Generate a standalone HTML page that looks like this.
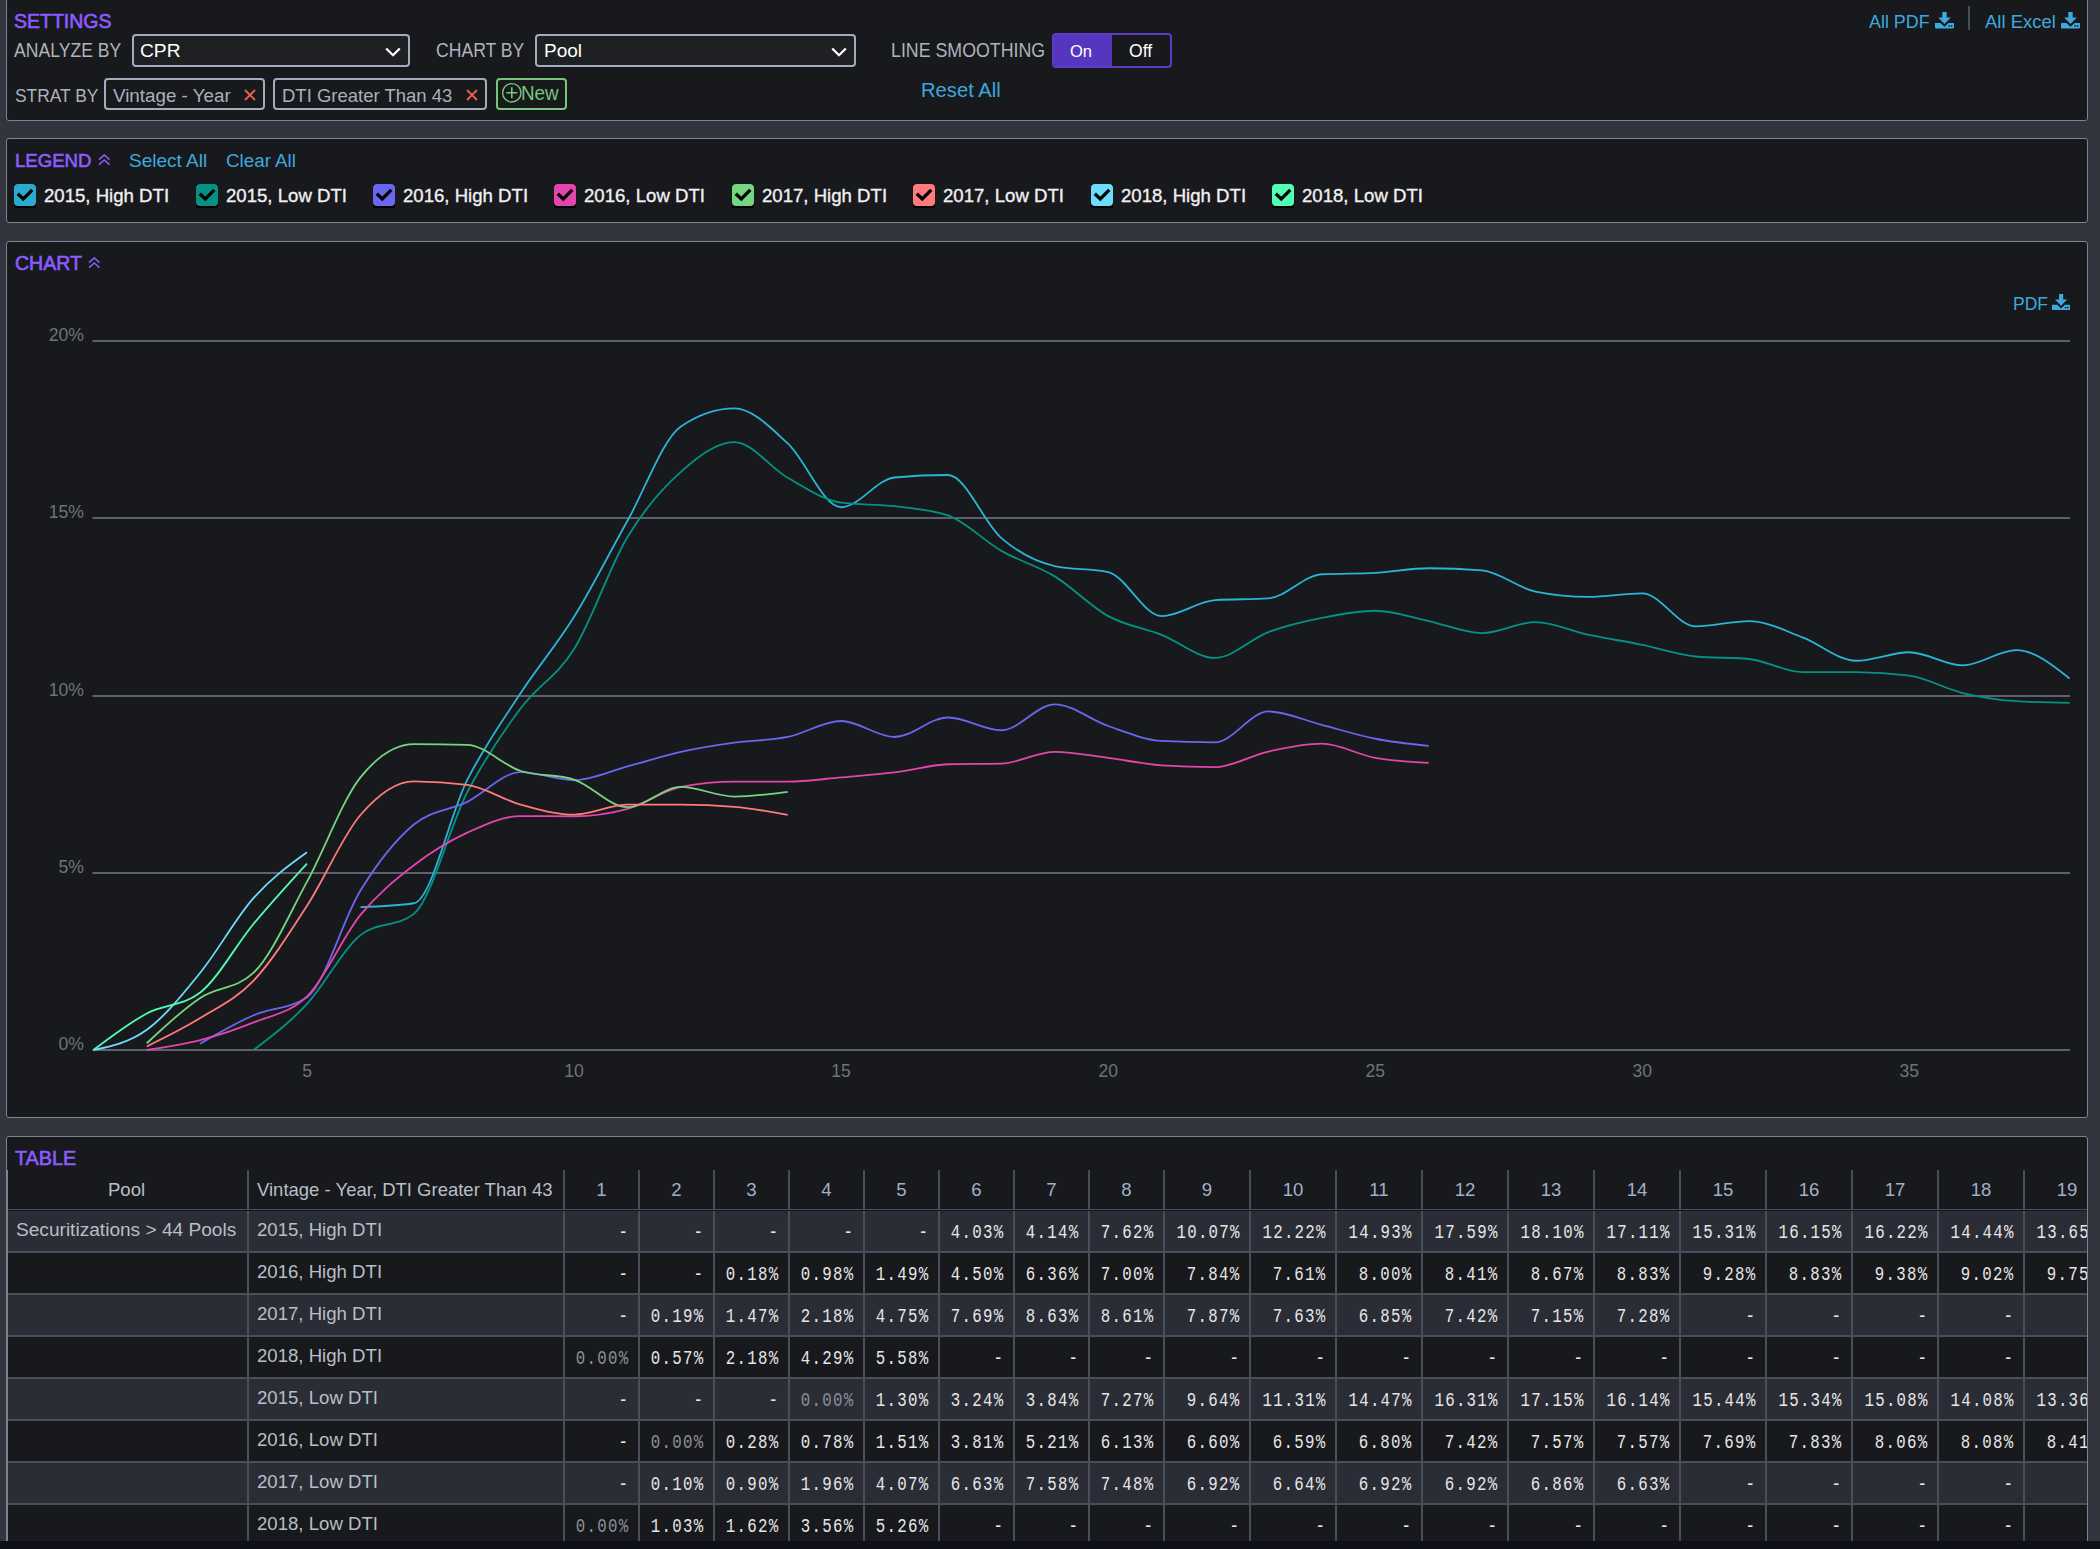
<!DOCTYPE html>
<html><head><meta charset="utf-8"><title>CPR Chart</title>
<style>
html,body{margin:0;padding:0}
body{width:2100px;height:1549px;overflow:hidden;position:relative;background:#32353e;font-family:'Liberation Sans',sans-serif}
.panel{position:absolute;left:6px;width:2082px;box-sizing:border-box;border:1px solid #7d838f;border-radius:3px;background:#18191c;overflow:hidden}
</style></head><body>

<div class="panel" style="top:-2px;height:123px"></div>
<div class="panel" style="top:138px;height:85px"></div>
<div class="panel" style="top:241px;height:877px"></div>
<div class="panel" style="top:1136px;height:500px"></div>
<div style="position:absolute;left:14px;top:10.35px;font:400 19.5px/22.42px 'Liberation Sans',sans-serif;color:#8c5cff;white-space:pre;-webkit-text-stroke:0.6px #8c5cff">SETTINGS</div>
<div style="position:absolute;left:14px;top:41.07px;font:400 17.6px/20.24px 'Liberation Sans',sans-serif;color:#aeb3bd;white-space:pre;transform:scaleY(1.1);transform-origin:0 16.19px">ANALYZE BY</div>
<div style="position:absolute;left:132px;top:34px;width:278px;height:33px;box-sizing:border-box;border:2px solid #a3acbd;border-radius:4px;background:#1f2024"></div>
<div style="position:absolute;left:140px;top:39.62px;font:400 19.2px/22.08px 'Liberation Sans',sans-serif;color:#ffffff;white-space:pre;">CPR</div>
<svg style="position:absolute;left:385px;top:46.7px" width="16" height="10" viewBox="0 0 16 10"><polyline points="1.2,1.5 8,8.2 14.8,1.5" fill="none" stroke="#fff" stroke-width="2.3"/></svg>
<div style="position:absolute;left:436px;top:41.07px;font:400 17.6px/20.24px 'Liberation Sans',sans-serif;color:#aeb3bd;white-space:pre;transform:scaleY(1.1);transform-origin:0 16.19px">CHART BY</div>
<div style="position:absolute;left:535px;top:34px;width:321px;height:33px;box-sizing:border-box;border:2px solid #a3acbd;border-radius:4px;background:#1f2024"></div>
<div style="position:absolute;left:544px;top:39.80px;font:400 19.0px/21.85px 'Liberation Sans',sans-serif;color:#ffffff;white-space:pre;">Pool</div>
<svg style="position:absolute;left:831px;top:46.7px" width="16" height="10" viewBox="0 0 16 10"><polyline points="1.2,1.5 8,8.2 14.8,1.5" fill="none" stroke="#fff" stroke-width="2.3"/></svg>
<div style="position:absolute;left:891px;top:40.89px;font:400 17.8px/20.47px 'Liberation Sans',sans-serif;color:#aeb3bd;white-space:pre;transform:scaleY(1.1);transform-origin:0 16.38px">LINE SMOOTHING</div>
<div style="position:absolute;left:1052px;top:33px;width:120px;height:35px;box-sizing:border-box;border:2px solid #5a3cc6;border-radius:4px;background:#18191c;overflow:hidden"><div style="position:absolute;left:0;top:0;width:58px;height:31px;background:#5636be"></div></div>
<div style="position:absolute;left:1070px;top:42.07px;font:400 16.5px/18.97px 'Liberation Sans',sans-serif;color:#ffffff;white-space:pre;">On</div>
<div style="position:absolute;left:1129px;top:41.07px;font:400 17.6px/20.24px 'Liberation Sans',sans-serif;color:#ffffff;white-space:pre;">Off</div>
<div style="position:absolute;left:921px;top:78.72px;font:400 20.2px/23.23px 'Liberation Sans',sans-serif;color:#3ea8de;white-space:pre;">Reset All</div>
<div style="position:absolute;left:15px;top:86.25px;font:400 17.4px/20.01px 'Liberation Sans',sans-serif;color:#aeb3bd;white-space:pre;transform:scaleY(1.1);transform-origin:0 16.01px">STRAT BY</div>
<div style="position:absolute;left:104px;top:78px;width:161px;height:32px;box-sizing:border-box;border:2px solid #a3acbd;border-radius:4px"></div><div style="position:absolute;left:113px;top:84.99px;font:400 18.8px/21.62px 'Liberation Sans',sans-serif;color:#a9b0bd;white-space:pre;">Vintage - Year</div>
<svg style="position:absolute;left:244px;top:89px" width="12" height="12" viewBox="0 0 12 12"><path d="M1,1L11,11M11,1L1,11" stroke="#e8604c" stroke-width="1.9"/></svg>
<div style="position:absolute;left:273px;top:78px;width:214px;height:32px;box-sizing:border-box;border:2px solid #a3acbd;border-radius:4px"></div><div style="position:absolute;left:282px;top:85.26px;font:400 18.5px/21.27px 'Liberation Sans',sans-serif;color:#a9b0bd;white-space:pre;">DTI Greater Than 43</div>
<svg style="position:absolute;left:466px;top:89px" width="12" height="12" viewBox="0 0 12 12"><path d="M1,1L11,11M11,1L1,11" stroke="#e8604c" stroke-width="1.9"/></svg>
<div style="position:absolute;left:496px;top:78px;width:71px;height:32px;box-sizing:border-box;border:2px solid #79c57c;border-radius:4px"></div>
<svg style="position:absolute;left:501px;top:82px" width="22" height="22" viewBox="0 0 22 22"><circle cx="10.8" cy="10.8" r="9.2" fill="none" stroke="#79c57c" stroke-width="1.4"/><path d="M10.8,5.3V16.3M5.3,10.8H16.3" stroke="#79c57c" stroke-width="1.6"/></svg>
<div style="position:absolute;left:521px;top:83.49px;font:400 18.8px/21.62px 'Liberation Sans',sans-serif;color:#79c57c;white-space:pre;transform:scaleY(1.06);transform-origin:0 17.3px">New</div>
<div style="position:absolute;left:1869px;top:11.60px;font:400 17.9px/20.58px 'Liberation Sans',sans-serif;color:#3ea8de;white-space:pre;">All PDF</div>
<svg style="position:absolute;left:1935px;top:11.7px" width="19" height="17" viewBox="0 0 19 17" preserveAspectRatio="none">
<path d="M7.3,0H11.7V5.6H15.9L9.5,12L3.1,5.6H7.3Z" fill="#3ea8de"/>
<path d="M0,11H5.4L9.5,14.8L13.6,11H19V15.6Q19,16.4 18.2,16.4H0.8Q0,16.4 0,15.6Z" fill="#3ea8de"/>
<rect x="13.4" y="13.2" width="1.5" height="1.5" fill="#18191c"/><rect x="15.8" y="13.2" width="1.5" height="1.5" fill="#18191c"/>
</svg>
<div style="position:absolute;left:1968px;top:6px;width:2px;height:24px;background:#4a4e57"></div>
<div style="position:absolute;left:1985px;top:11.06px;font:400 18.5px/21.27px 'Liberation Sans',sans-serif;color:#3ea8de;white-space:pre;">All Excel</div>
<svg style="position:absolute;left:2061px;top:11.7px" width="19" height="17" viewBox="0 0 19 17" preserveAspectRatio="none">
<path d="M7.3,0H11.7V5.6H15.9L9.5,12L3.1,5.6H7.3Z" fill="#3ea8de"/>
<path d="M0,11H5.4L9.5,14.8L13.6,11H19V15.6Q19,16.4 18.2,16.4H0.8Q0,16.4 0,15.6Z" fill="#3ea8de"/>
<rect x="13.4" y="13.2" width="1.5" height="1.5" fill="#18191c"/><rect x="15.8" y="13.2" width="1.5" height="1.5" fill="#18191c"/>
</svg>
<div style="position:absolute;left:15px;top:150.17px;font:400 18.6px/21.39px 'Liberation Sans',sans-serif;color:#8c5cff;white-space:pre;-webkit-text-stroke:0.6px #8c5cff">LEGEND</div>
<svg style="position:absolute;left:98px;top:154px" width="12.5" height="11.5" viewBox="0 0 12.5 11.5">
<polyline points="1,5.6 6.25,0.9 11.5,5.6" fill="none" stroke="#8c5cff" stroke-width="1.5"/>
<polyline points="1,10.6 6.25,5.9 11.5,10.6" fill="none" stroke="#8c5cff" stroke-width="1.5"/>
</svg>
<div style="position:absolute;left:129px;top:149.81px;font:400 19.0px/21.85px 'Liberation Sans',sans-serif;color:#3ea8de;white-space:pre;">Select All</div>
<div style="position:absolute;left:226px;top:149.99px;font:400 18.8px/21.62px 'Liberation Sans',sans-serif;color:#3ea8de;white-space:pre;">Clear All</div>
<div style="position:absolute;left:14px;top:184px;width:21.5px;height:23.5px;background:#000"></div>
<div style="position:absolute;left:14px;top:184px;width:22px;height:22px;border-radius:4px;background:#2aaacc"></div>
<svg style="position:absolute;left:14px;top:184px" width="22" height="22" viewBox="0 0 22 22"><polyline points="3.8,9.7 9.3,15.0 18.3,5.9" fill="none" stroke="#000" stroke-width="3.3"/></svg>
<div style="position:absolute;left:44px;top:184.67px;font:400 18.6px/21.39px 'Liberation Sans',sans-serif;color:#f0f0f0;white-space:pre;-webkit-text-stroke:0.35px #f0f0f0">2015, High DTI</div>
<div style="position:absolute;left:196px;top:184px;width:21.5px;height:23.5px;background:#000"></div>
<div style="position:absolute;left:196px;top:184px;width:22px;height:22px;border-radius:4px;background:#049284"></div>
<svg style="position:absolute;left:196px;top:184px" width="22" height="22" viewBox="0 0 22 22"><polyline points="3.8,9.7 9.3,15.0 18.3,5.9" fill="none" stroke="#000" stroke-width="3.3"/></svg>
<div style="position:absolute;left:226px;top:184.67px;font:400 18.6px/21.39px 'Liberation Sans',sans-serif;color:#f0f0f0;white-space:pre;-webkit-text-stroke:0.35px #f0f0f0">2015, Low DTI</div>
<div style="position:absolute;left:373px;top:184px;width:21.5px;height:23.5px;background:#000"></div>
<div style="position:absolute;left:373px;top:184px;width:22px;height:22px;border-radius:4px;background:#6966f0"></div>
<svg style="position:absolute;left:373px;top:184px" width="22" height="22" viewBox="0 0 22 22"><polyline points="3.8,9.7 9.3,15.0 18.3,5.9" fill="none" stroke="#000" stroke-width="3.3"/></svg>
<div style="position:absolute;left:403px;top:184.67px;font:400 18.6px/21.39px 'Liberation Sans',sans-serif;color:#f0f0f0;white-space:pre;-webkit-text-stroke:0.35px #f0f0f0">2016, High DTI</div>
<div style="position:absolute;left:554px;top:184px;width:21.5px;height:23.5px;background:#000"></div>
<div style="position:absolute;left:554px;top:184px;width:22px;height:22px;border-radius:4px;background:#e246ac"></div>
<svg style="position:absolute;left:554px;top:184px" width="22" height="22" viewBox="0 0 22 22"><polyline points="3.8,9.7 9.3,15.0 18.3,5.9" fill="none" stroke="#000" stroke-width="3.3"/></svg>
<div style="position:absolute;left:584px;top:184.67px;font:400 18.6px/21.39px 'Liberation Sans',sans-serif;color:#f0f0f0;white-space:pre;-webkit-text-stroke:0.35px #f0f0f0">2016, Low DTI</div>
<div style="position:absolute;left:732px;top:184px;width:21.5px;height:23.5px;background:#000"></div>
<div style="position:absolute;left:732px;top:184px;width:22px;height:22px;border-radius:4px;background:#75d580"></div>
<svg style="position:absolute;left:732px;top:184px" width="22" height="22" viewBox="0 0 22 22"><polyline points="3.8,9.7 9.3,15.0 18.3,5.9" fill="none" stroke="#000" stroke-width="3.3"/></svg>
<div style="position:absolute;left:762px;top:184.67px;font:400 18.6px/21.39px 'Liberation Sans',sans-serif;color:#f0f0f0;white-space:pre;-webkit-text-stroke:0.35px #f0f0f0">2017, High DTI</div>
<div style="position:absolute;left:913px;top:184px;width:21.5px;height:23.5px;background:#000"></div>
<div style="position:absolute;left:913px;top:184px;width:22px;height:22px;border-radius:4px;background:#ff7a7a"></div>
<svg style="position:absolute;left:913px;top:184px" width="22" height="22" viewBox="0 0 22 22"><polyline points="3.8,9.7 9.3,15.0 18.3,5.9" fill="none" stroke="#000" stroke-width="3.3"/></svg>
<div style="position:absolute;left:943px;top:184.67px;font:400 18.6px/21.39px 'Liberation Sans',sans-serif;color:#f0f0f0;white-space:pre;-webkit-text-stroke:0.35px #f0f0f0">2017, Low DTI</div>
<div style="position:absolute;left:1091px;top:184px;width:21.5px;height:23.5px;background:#000"></div>
<div style="position:absolute;left:1091px;top:184px;width:22px;height:22px;border-radius:4px;background:#6cdcfc"></div>
<svg style="position:absolute;left:1091px;top:184px" width="22" height="22" viewBox="0 0 22 22"><polyline points="3.8,9.7 9.3,15.0 18.3,5.9" fill="none" stroke="#000" stroke-width="3.3"/></svg>
<div style="position:absolute;left:1121px;top:184.67px;font:400 18.6px/21.39px 'Liberation Sans',sans-serif;color:#f0f0f0;white-space:pre;-webkit-text-stroke:0.35px #f0f0f0">2018, High DTI</div>
<div style="position:absolute;left:1272px;top:184px;width:21.5px;height:23.5px;background:#000"></div>
<div style="position:absolute;left:1272px;top:184px;width:22px;height:22px;border-radius:4px;background:#50ffb2"></div>
<svg style="position:absolute;left:1272px;top:184px" width="22" height="22" viewBox="0 0 22 22"><polyline points="3.8,9.7 9.3,15.0 18.3,5.9" fill="none" stroke="#000" stroke-width="3.3"/></svg>
<div style="position:absolute;left:1302px;top:184.67px;font:400 18.6px/21.39px 'Liberation Sans',sans-serif;color:#f0f0f0;white-space:pre;-webkit-text-stroke:0.35px #f0f0f0">2018, Low DTI</div>
<div style="position:absolute;left:15px;top:252.35px;font:400 19.5px/22.42px 'Liberation Sans',sans-serif;color:#8c5cff;white-space:pre;-webkit-text-stroke:0.6px #8c5cff">CHART</div>
<svg style="position:absolute;left:88px;top:257px" width="12.5" height="11.5" viewBox="0 0 12.5 11.5">
<polyline points="1,5.6 6.25,0.9 11.5,5.6" fill="none" stroke="#8c5cff" stroke-width="1.5"/>
<polyline points="1,10.6 6.25,5.9 11.5,10.6" fill="none" stroke="#8c5cff" stroke-width="1.5"/>
</svg>
<div style="position:absolute;left:2013px;top:294.16px;font:400 17.5px/20.12px 'Liberation Sans',sans-serif;color:#3ea8de;white-space:pre;">PDF</div>
<svg style="position:absolute;left:2052px;top:293.8px" width="18.2" height="16.6" viewBox="0 0 19 17" preserveAspectRatio="none">
<path d="M7.3,0H11.7V5.6H15.9L9.5,12L3.1,5.6H7.3Z" fill="#3ea8de"/>
<path d="M0,11H5.4L9.5,14.8L13.6,11H19V15.6Q19,16.4 18.2,16.4H0.8Q0,16.4 0,15.6Z" fill="#3ea8de"/>
<rect x="13.4" y="13.2" width="1.5" height="1.5" fill="#18191c"/><rect x="15.8" y="13.2" width="1.5" height="1.5" fill="#18191c"/>
</svg>
<svg style="position:absolute;left:0;top:0" width="2100" height="1549" viewBox="0 0 2100 1549"><rect x="92.5" y="340" width="1977.5" height="2" fill="#5c616b"/><rect x="92.5" y="517" width="1977.5" height="2" fill="#5c616b"/><rect x="92.5" y="695" width="1977.5" height="2" fill="#5c616b"/><rect x="92.5" y="872" width="1977.5" height="2" fill="#5c616b"/><rect x="92.5" y="1049" width="1977.5" height="2" fill="#5c616b"/></svg>
<div style="position:absolute;right:2016px;top:325.07px;font:400 17.6px/20.24px 'Liberation Sans',sans-serif;color:#6e737d;white-space:pre;">20%</div>
<div style="position:absolute;right:2016px;top:502.07px;font:400 17.6px/20.24px 'Liberation Sans',sans-serif;color:#6e737d;white-space:pre;">15%</div>
<div style="position:absolute;right:2016px;top:680.07px;font:400 17.6px/20.24px 'Liberation Sans',sans-serif;color:#6e737d;white-space:pre;">10%</div>
<div style="position:absolute;right:2016px;top:857.07px;font:400 17.6px/20.24px 'Liberation Sans',sans-serif;color:#6e737d;white-space:pre;">5%</div>
<div style="position:absolute;right:2016px;top:1034.07px;font:400 17.6px/20.24px 'Liberation Sans',sans-serif;color:#6e737d;white-space:pre;">0%</div>
<div style="position:absolute;left:107.03999999999996px;width:400px;text-align:center;top:1061.07px;font:400 17.6px/20.24px 'Liberation Sans',sans-serif;color:#6e737d;white-space:pre;">5</div>
<div style="position:absolute;left:374.0899999999999px;width:400px;text-align:center;top:1061.07px;font:400 17.6px/20.24px 'Liberation Sans',sans-serif;color:#6e737d;white-space:pre;">10</div>
<div style="position:absolute;left:641.14px;width:400px;text-align:center;top:1061.07px;font:400 17.6px/20.24px 'Liberation Sans',sans-serif;color:#6e737d;white-space:pre;">15</div>
<div style="position:absolute;left:908.19px;width:400px;text-align:center;top:1061.07px;font:400 17.6px/20.24px 'Liberation Sans',sans-serif;color:#6e737d;white-space:pre;">20</div>
<div style="position:absolute;left:1175.24px;width:400px;text-align:center;top:1061.07px;font:400 17.6px/20.24px 'Liberation Sans',sans-serif;color:#6e737d;white-space:pre;">25</div>
<div style="position:absolute;left:1442.29px;width:400px;text-align:center;top:1061.07px;font:400 17.6px/20.24px 'Liberation Sans',sans-serif;color:#6e737d;white-space:pre;">30</div>
<div style="position:absolute;left:1709.34px;width:400px;text-align:center;top:1061.07px;font:400 17.6px/20.24px 'Liberation Sans',sans-serif;color:#6e737d;white-space:pre;">35</div>
<svg style="position:absolute;left:0;top:0" width="2100" height="1549" viewBox="0 0 2100 1549"><path d="M360.45,907.14C378.25,906.49 396.06,905.84 413.86,903.24C431.66,900.64 449.47,814.91 467.27,779.87C485.07,744.83 502.88,720.20 520.68,693.02C538.48,665.84 556.29,645.52 574.09,616.80C591.89,588.09 609.70,552.46 627.50,520.73C645.30,489.00 663.11,438.49 680.91,426.43C698.71,414.38 716.52,408.35 734.32,408.35C752.12,408.35 769.93,426.97 787.73,443.45C805.53,459.93 823.34,507.26 841.14,507.26C858.94,507.26 876.75,479.14 894.55,477.48C912.35,475.83 930.16,475.00 947.96,475.00C965.76,475.00 983.57,522.92 1001.37,538.10C1019.17,553.29 1036.98,562.09 1054.78,566.11C1072.58,570.13 1090.39,568.12 1108.19,572.13C1125.99,576.15 1143.80,616.09 1161.60,616.09C1179.40,616.09 1197.21,601.32 1215.01,600.14C1232.81,598.96 1250.62,599.55 1268.42,598.37C1286.22,597.19 1304.03,575.21 1321.83,574.26C1339.63,573.32 1357.44,573.79 1375.24,572.84C1393.04,571.90 1410.85,568.23 1428.65,568.23C1446.45,568.23 1464.26,568.94 1482.06,570.36C1499.86,571.78 1517.67,588.09 1535.47,591.63C1553.27,595.18 1571.08,596.95 1588.88,596.95C1606.68,596.95 1624.49,593.40 1642.29,593.40C1660.09,593.40 1677.90,626.37 1695.70,626.37C1713.50,626.37 1731.31,621.05 1749.11,621.05C1766.91,621.05 1784.72,630.74 1802.52,637.36C1820.32,643.98 1838.13,660.76 1855.93,660.76C1873.73,660.76 1891.54,652.25 1909.34,652.25C1927.14,652.25 1944.95,665.37 1962.75,665.37C1980.55,665.37 1998.36,650.12 2016.16,650.12C2033.96,650.12 2051.77,664.30 2069.57,678.48" fill="none" stroke="#2ab4d7" stroke-width="1.8"/><path d="M253.63,1050.00C271.43,1036.53 289.24,1023.06 307.04,1003.91C324.84,984.77 342.65,949.32 360.45,935.14C378.25,920.96 396.06,928.05 413.86,913.87C431.66,899.69 449.47,826.55 467.27,792.28C485.07,758.01 502.88,732.13 520.68,708.26C538.48,684.39 556.29,677.60 574.09,649.06C591.89,620.52 609.70,566.58 627.50,537.04C645.30,507.50 663.11,487.64 680.91,471.81C698.71,455.98 716.52,442.03 734.32,442.03C752.12,442.03 769.93,467.73 787.73,477.84C805.53,487.94 823.34,500.29 841.14,502.65C858.94,505.02 876.75,504.07 894.55,506.20C912.35,508.32 930.16,509.27 947.96,515.41C965.76,521.56 983.57,540.70 1001.37,550.86C1019.17,561.03 1036.98,565.52 1054.78,576.39C1072.58,587.26 1090.39,606.34 1108.19,616.09C1125.99,625.84 1143.80,627.91 1161.60,634.88C1179.40,641.85 1197.21,657.92 1215.01,657.92C1232.81,657.92 1250.62,638.72 1268.42,632.04C1286.22,625.37 1304.03,621.41 1321.83,617.86C1339.63,614.32 1357.44,610.77 1375.24,610.77C1393.04,610.77 1410.85,617.33 1428.65,621.05C1446.45,624.78 1464.26,633.11 1482.06,633.11C1499.86,633.11 1517.67,622.12 1535.47,622.12C1553.27,622.12 1571.08,631.10 1588.88,634.88C1606.68,638.66 1624.49,641.20 1642.29,644.81C1660.09,648.41 1677.90,654.85 1695.70,656.50C1713.50,658.16 1731.31,657.33 1749.11,658.99C1766.91,660.64 1784.72,672.10 1802.52,672.10C1820.32,672.10 1838.13,672.10 1855.93,672.10C1873.73,672.10 1891.54,673.28 1909.34,675.65C1927.14,678.01 1944.95,688.76 1962.75,693.02C1980.55,697.27 1998.36,699.99 2016.16,701.17C2033.96,702.35 2051.77,702.65 2069.57,702.94" fill="none" stroke="#049284" stroke-width="1.8"/><path d="M200.22,1043.62C218.02,1033.31 235.83,1023.00 253.63,1015.26C271.43,1007.52 289.24,1009.23 307.04,997.18C324.84,985.13 342.65,919.25 360.45,890.48C378.25,861.70 396.06,839.31 413.86,824.54C431.66,809.77 449.47,810.59 467.27,801.85C485.07,793.11 502.88,772.07 520.68,772.07C538.48,772.07 556.29,780.23 574.09,780.23C591.89,780.23 609.70,771.13 627.50,766.40C645.30,761.67 663.11,755.82 680.91,751.87C698.71,747.91 716.52,745.13 734.32,742.65C752.12,740.17 769.93,740.58 787.73,736.98C805.53,733.37 823.34,721.02 841.14,721.02C858.94,721.02 876.75,736.98 894.55,736.98C912.35,736.98 930.16,717.48 947.96,717.48C965.76,717.48 983.57,730.24 1001.37,730.24C1019.17,730.24 1036.98,704.36 1054.78,704.36C1072.58,704.36 1090.39,719.90 1108.19,725.99C1125.99,732.07 1143.80,739.93 1161.60,740.88C1179.40,741.82 1197.21,742.29 1215.01,742.29C1232.81,742.29 1250.62,711.45 1268.42,711.45C1286.22,711.45 1304.03,720.37 1321.83,724.92C1339.63,729.47 1357.44,735.26 1375.24,738.75C1393.04,742.23 1410.85,744.04 1428.65,745.84" fill="none" stroke="#6966f0" stroke-width="1.8"/><path d="M146.81,1050.00C164.61,1047.34 182.42,1044.68 200.22,1040.07C218.02,1035.47 235.83,1029.62 253.63,1022.35C271.43,1015.08 289.24,1013.72 307.04,996.47C324.84,979.22 342.65,936.80 360.45,914.94C378.25,893.07 396.06,879.01 413.86,865.31C431.66,851.60 449.47,840.90 467.27,832.69C485.07,824.48 502.88,816.03 520.68,816.03C538.48,816.03 556.29,816.38 574.09,816.38C591.89,816.38 609.70,813.84 627.50,808.94C645.30,804.04 663.11,790.51 680.91,786.96C698.71,783.42 716.52,781.64 734.32,781.64C752.12,781.64 769.93,781.64 787.73,781.64C805.53,781.64 823.34,778.93 841.14,777.39C858.94,775.85 876.75,774.61 894.55,772.43C912.35,770.24 930.16,764.75 947.96,764.27C965.76,763.80 983.57,764.04 1001.37,763.56C1019.17,763.09 1036.98,751.87 1054.78,751.87C1072.58,751.87 1090.39,755.65 1108.19,757.89C1125.99,760.14 1143.80,764.15 1161.60,765.34C1179.40,766.52 1197.21,767.11 1215.01,767.11C1232.81,767.11 1250.62,755.41 1268.42,751.51C1286.22,747.61 1304.03,743.71 1321.83,743.71C1339.63,743.71 1357.44,754.70 1375.24,757.89C1393.04,761.08 1410.85,761.97 1428.65,762.86" fill="none" stroke="#e246ac" stroke-width="1.8"/><path d="M146.81,1043.26C164.61,1026.46 182.42,1009.65 200.22,997.89C218.02,986.13 235.83,989.50 253.63,972.72C271.43,955.94 289.24,914.17 307.04,881.61C324.84,849.06 342.65,799.60 360.45,777.39C378.25,755.17 396.06,744.07 413.86,744.07C431.66,744.07 449.47,744.30 467.27,744.78C485.07,745.25 502.88,765.34 520.68,771.01C538.48,776.68 556.29,773.84 574.09,779.52C591.89,785.19 609.70,807.17 627.50,807.17C645.30,807.17 663.11,786.96 680.91,786.96C698.71,786.96 716.52,796.53 734.32,796.53C752.12,796.53 769.93,794.23 787.73,791.92" fill="none" stroke="#75d580" stroke-width="1.8"/><path d="M146.81,1046.45C164.61,1037.77 182.42,1029.08 200.22,1018.10C218.02,1007.11 235.83,999.25 253.63,980.52C271.43,961.79 289.24,933.31 307.04,905.72C324.84,878.13 342.65,835.70 360.45,814.97C378.25,794.23 396.06,781.29 413.86,781.29C431.66,781.29 449.47,782.47 467.27,784.83C485.07,787.20 502.88,799.72 520.68,804.69C538.48,809.65 556.29,814.61 574.09,814.61C591.89,814.61 609.70,804.69 627.50,804.69C645.30,804.69 663.11,804.69 680.91,804.69C698.71,804.69 716.52,805.39 734.32,806.81C752.12,808.23 769.93,811.60 787.73,814.97" fill="none" stroke="#ff7a7a" stroke-width="1.8"/><path d="M93.40,1050.00C111.20,1046.34 129.01,1042.67 146.81,1029.79C164.61,1016.91 182.42,994.70 200.22,972.72C218.02,950.74 235.83,918.01 253.63,897.92C271.43,877.83 289.24,865.01 307.04,852.19" fill="none" stroke="#6cdcfc" stroke-width="1.8"/><path d="M93.40,1050.00C111.20,1036.53 129.01,1023.06 146.81,1013.49C164.61,1003.91 182.42,1006.51 200.22,992.57C218.02,978.63 235.83,945.30 253.63,923.80C271.43,902.29 289.24,882.91 307.04,863.53" fill="none" stroke="#50ffb2" stroke-width="1.8"/></svg>
<div style="position:absolute;left:15px;top:1147.08px;font:400 19.8px/22.77px 'Liberation Sans',sans-serif;color:#8c5cff;white-space:pre;-webkit-text-stroke:0.6px #8c5cff">TABLE</div>
<div style="position:absolute;left:0;top:0;width:2087px;height:1549px;overflow:hidden"><div style="position:absolute;left:7px;top:1211px;width:2110px;height:40px;background:#2a2d35"></div><div style="position:absolute;left:7px;top:1253px;width:2110px;height:40px;background:#18191c"></div><div style="position:absolute;left:7px;top:1295px;width:2110px;height:40px;background:#2a2d35"></div><div style="position:absolute;left:7px;top:1337px;width:2110px;height:40px;background:#18191c"></div><div style="position:absolute;left:7px;top:1379px;width:2110px;height:40px;background:#2a2d35"></div><div style="position:absolute;left:7px;top:1421px;width:2110px;height:40px;background:#18191c"></div><div style="position:absolute;left:7px;top:1463px;width:2110px;height:40px;background:#2a2d35"></div><div style="position:absolute;left:7px;top:1505px;width:2110px;height:40px;background:#18191c"></div><div style="position:absolute;left:7px;top:1209px;width:2110px;height:1px;background:#4a4e58"></div><div style="position:absolute;left:7px;top:1251px;width:2110px;height:2px;background:#4a4e58"></div><div style="position:absolute;left:7px;top:1293px;width:2110px;height:2px;background:#4a4e58"></div><div style="position:absolute;left:7px;top:1335px;width:2110px;height:2px;background:#4a4e58"></div><div style="position:absolute;left:7px;top:1377px;width:2110px;height:2px;background:#4a4e58"></div><div style="position:absolute;left:7px;top:1419px;width:2110px;height:2px;background:#4a4e58"></div><div style="position:absolute;left:7px;top:1461px;width:2110px;height:2px;background:#4a4e58"></div><div style="position:absolute;left:7px;top:1503px;width:2110px;height:2px;background:#4a4e58"></div><div style="position:absolute;left:7px;top:1545px;width:2110px;height:2px;background:#4a4e58"></div><div style="position:absolute;left:247px;top:1170px;width:2px;height:380px;background:#4a4e58"></div><div style="position:absolute;left:563px;top:1170px;width:2px;height:380px;background:#4a4e58"></div><div style="position:absolute;left:638px;top:1170px;width:2px;height:380px;background:#4a4e58"></div><div style="position:absolute;left:713px;top:1170px;width:2px;height:380px;background:#4a4e58"></div><div style="position:absolute;left:788px;top:1170px;width:2px;height:380px;background:#4a4e58"></div><div style="position:absolute;left:863px;top:1170px;width:2px;height:380px;background:#4a4e58"></div><div style="position:absolute;left:938px;top:1170px;width:2px;height:380px;background:#4a4e58"></div><div style="position:absolute;left:1013px;top:1170px;width:2px;height:380px;background:#4a4e58"></div><div style="position:absolute;left:1088px;top:1170px;width:2px;height:380px;background:#4a4e58"></div><div style="position:absolute;left:1163px;top:1170px;width:2px;height:380px;background:#4a4e58"></div><div style="position:absolute;left:1249px;top:1170px;width:2px;height:380px;background:#4a4e58"></div><div style="position:absolute;left:1335px;top:1170px;width:2px;height:380px;background:#4a4e58"></div><div style="position:absolute;left:1421px;top:1170px;width:2px;height:380px;background:#4a4e58"></div><div style="position:absolute;left:1507px;top:1170px;width:2px;height:380px;background:#4a4e58"></div><div style="position:absolute;left:1593px;top:1170px;width:2px;height:380px;background:#4a4e58"></div><div style="position:absolute;left:1679px;top:1170px;width:2px;height:380px;background:#4a4e58"></div><div style="position:absolute;left:1765px;top:1170px;width:2px;height:380px;background:#4a4e58"></div><div style="position:absolute;left:1851px;top:1170px;width:2px;height:380px;background:#4a4e58"></div><div style="position:absolute;left:1937px;top:1170px;width:2px;height:380px;background:#4a4e58"></div><div style="position:absolute;left:2023px;top:1170px;width:2px;height:380px;background:#4a4e58"></div><div style="position:absolute;left:2109px;top:1170px;width:2px;height:380px;background:#4a4e58"></div><div style="position:absolute;left:6px;top:1170px;width:2px;height:380px;background:#7d838f"></div><div style="position:absolute;left:8px;top:1210px;width:2110px;height:1px;background:#16171a"></div><div style="position:absolute;left:-73.5px;width:400px;text-align:center;top:1179.17px;font:400 18.6px/21.39px 'Liberation Sans',sans-serif;color:#b9bec8;white-space:pre;">Pool</div><div style="position:absolute;left:257px;top:1179.26px;font:400 18.5px/21.27px 'Liberation Sans',sans-serif;color:#b9bec8;white-space:pre;">Vintage - Year, DTI Greater Than 43</div><div style="position:absolute;left:401.5px;width:400px;text-align:center;top:1179.17px;font:400 18.6px/21.39px 'Liberation Sans',sans-serif;color:#9fb1c9;white-space:pre;">1</div><div style="position:absolute;left:476.5px;width:400px;text-align:center;top:1179.17px;font:400 18.6px/21.39px 'Liberation Sans',sans-serif;color:#9fb1c9;white-space:pre;">2</div><div style="position:absolute;left:551.5px;width:400px;text-align:center;top:1179.17px;font:400 18.6px/21.39px 'Liberation Sans',sans-serif;color:#9fb1c9;white-space:pre;">3</div><div style="position:absolute;left:626.5px;width:400px;text-align:center;top:1179.17px;font:400 18.6px/21.39px 'Liberation Sans',sans-serif;color:#9fb1c9;white-space:pre;">4</div><div style="position:absolute;left:701.5px;width:400px;text-align:center;top:1179.17px;font:400 18.6px/21.39px 'Liberation Sans',sans-serif;color:#9fb1c9;white-space:pre;">5</div><div style="position:absolute;left:776.5px;width:400px;text-align:center;top:1179.17px;font:400 18.6px/21.39px 'Liberation Sans',sans-serif;color:#9fb1c9;white-space:pre;">6</div><div style="position:absolute;left:851.5px;width:400px;text-align:center;top:1179.17px;font:400 18.6px/21.39px 'Liberation Sans',sans-serif;color:#9fb1c9;white-space:pre;">7</div><div style="position:absolute;left:926.5px;width:400px;text-align:center;top:1179.17px;font:400 18.6px/21.39px 'Liberation Sans',sans-serif;color:#9fb1c9;white-space:pre;">8</div><div style="position:absolute;left:1007.0px;width:400px;text-align:center;top:1179.17px;font:400 18.6px/21.39px 'Liberation Sans',sans-serif;color:#9fb1c9;white-space:pre;">9</div><div style="position:absolute;left:1093.0px;width:400px;text-align:center;top:1179.17px;font:400 18.6px/21.39px 'Liberation Sans',sans-serif;color:#9fb1c9;white-space:pre;">10</div><div style="position:absolute;left:1179.0px;width:400px;text-align:center;top:1179.17px;font:400 18.6px/21.39px 'Liberation Sans',sans-serif;color:#9fb1c9;white-space:pre;">11</div><div style="position:absolute;left:1265.0px;width:400px;text-align:center;top:1179.17px;font:400 18.6px/21.39px 'Liberation Sans',sans-serif;color:#9fb1c9;white-space:pre;">12</div><div style="position:absolute;left:1351.0px;width:400px;text-align:center;top:1179.17px;font:400 18.6px/21.39px 'Liberation Sans',sans-serif;color:#9fb1c9;white-space:pre;">13</div><div style="position:absolute;left:1437.0px;width:400px;text-align:center;top:1179.17px;font:400 18.6px/21.39px 'Liberation Sans',sans-serif;color:#9fb1c9;white-space:pre;">14</div><div style="position:absolute;left:1523.0px;width:400px;text-align:center;top:1179.17px;font:400 18.6px/21.39px 'Liberation Sans',sans-serif;color:#9fb1c9;white-space:pre;">15</div><div style="position:absolute;left:1609.0px;width:400px;text-align:center;top:1179.17px;font:400 18.6px/21.39px 'Liberation Sans',sans-serif;color:#9fb1c9;white-space:pre;">16</div><div style="position:absolute;left:1695.0px;width:400px;text-align:center;top:1179.17px;font:400 18.6px/21.39px 'Liberation Sans',sans-serif;color:#9fb1c9;white-space:pre;">17</div><div style="position:absolute;left:1781.0px;width:400px;text-align:center;top:1179.17px;font:400 18.6px/21.39px 'Liberation Sans',sans-serif;color:#9fb1c9;white-space:pre;">18</div><div style="position:absolute;left:1867.0px;width:400px;text-align:center;top:1179.17px;font:400 18.6px/21.39px 'Liberation Sans',sans-serif;color:#9fb1c9;white-space:pre;">19</div><div style="position:absolute;left:16px;top:1218.91px;font:400 19.1px/21.96px 'Liberation Sans',sans-serif;color:#b9bec8;white-space:pre;">Securitizations &gt; 44 Pools</div><div style="position:absolute;left:257px;top:1218.97px;font:400 18.6px/21.39px 'Liberation Sans',sans-serif;color:#b9bec8;white-space:pre;">2015, High DTI</div><div style="position:absolute;right:1457.31px;top:1222.2px;font:400 21px/22px 'Liberation Mono',monospace;letter-spacing:1.69px;color:#e6e6e6;white-space:pre;transform:scaleX(0.75);transform-origin:1.69px 50%;transform-origin:100% 50%">-</div><div style="position:absolute;right:1382.31px;top:1222.2px;font:400 21px/22px 'Liberation Mono',monospace;letter-spacing:1.69px;color:#e6e6e6;white-space:pre;transform:scaleX(0.75);transform-origin:1.69px 50%;transform-origin:100% 50%">-</div><div style="position:absolute;right:1307.31px;top:1222.2px;font:400 21px/22px 'Liberation Mono',monospace;letter-spacing:1.69px;color:#e6e6e6;white-space:pre;transform:scaleX(0.75);transform-origin:1.69px 50%;transform-origin:100% 50%">-</div><div style="position:absolute;right:1232.31px;top:1222.2px;font:400 21px/22px 'Liberation Mono',monospace;letter-spacing:1.69px;color:#e6e6e6;white-space:pre;transform:scaleX(0.75);transform-origin:1.69px 50%;transform-origin:100% 50%">-</div><div style="position:absolute;right:1157.31px;top:1222.2px;font:400 21px/22px 'Liberation Mono',monospace;letter-spacing:1.69px;color:#e6e6e6;white-space:pre;transform:scaleX(0.75);transform-origin:1.69px 50%;transform-origin:100% 50%">-</div><div style="position:absolute;right:1082.31px;top:1222.2px;font:400 21px/22px 'Liberation Mono',monospace;letter-spacing:1.69px;color:#e6e6e6;white-space:pre;transform:scaleX(0.75);transform-origin:1.69px 50%;transform-origin:100% 50%">4.03%</div><div style="position:absolute;right:1007.31px;top:1222.2px;font:400 21px/22px 'Liberation Mono',monospace;letter-spacing:1.69px;color:#e6e6e6;white-space:pre;transform:scaleX(0.75);transform-origin:1.69px 50%;transform-origin:100% 50%">4.14%</div><div style="position:absolute;right:932.31px;top:1222.2px;font:400 21px/22px 'Liberation Mono',monospace;letter-spacing:1.69px;color:#e6e6e6;white-space:pre;transform:scaleX(0.75);transform-origin:1.69px 50%;transform-origin:100% 50%">7.62%</div><div style="position:absolute;right:846.31px;top:1222.2px;font:400 21px/22px 'Liberation Mono',monospace;letter-spacing:1.69px;color:#e6e6e6;white-space:pre;transform:scaleX(0.75);transform-origin:1.69px 50%;transform-origin:100% 50%">10.07%</div><div style="position:absolute;right:760.31px;top:1222.2px;font:400 21px/22px 'Liberation Mono',monospace;letter-spacing:1.69px;color:#e6e6e6;white-space:pre;transform:scaleX(0.75);transform-origin:1.69px 50%;transform-origin:100% 50%">12.22%</div><div style="position:absolute;right:674.31px;top:1222.2px;font:400 21px/22px 'Liberation Mono',monospace;letter-spacing:1.69px;color:#e6e6e6;white-space:pre;transform:scaleX(0.75);transform-origin:1.69px 50%;transform-origin:100% 50%">14.93%</div><div style="position:absolute;right:588.31px;top:1222.2px;font:400 21px/22px 'Liberation Mono',monospace;letter-spacing:1.69px;color:#e6e6e6;white-space:pre;transform:scaleX(0.75);transform-origin:1.69px 50%;transform-origin:100% 50%">17.59%</div><div style="position:absolute;right:502.31px;top:1222.2px;font:400 21px/22px 'Liberation Mono',monospace;letter-spacing:1.69px;color:#e6e6e6;white-space:pre;transform:scaleX(0.75);transform-origin:1.69px 50%;transform-origin:100% 50%">18.10%</div><div style="position:absolute;right:416.31px;top:1222.2px;font:400 21px/22px 'Liberation Mono',monospace;letter-spacing:1.69px;color:#e6e6e6;white-space:pre;transform:scaleX(0.75);transform-origin:1.69px 50%;transform-origin:100% 50%">17.11%</div><div style="position:absolute;right:330.31px;top:1222.2px;font:400 21px/22px 'Liberation Mono',monospace;letter-spacing:1.69px;color:#e6e6e6;white-space:pre;transform:scaleX(0.75);transform-origin:1.69px 50%;transform-origin:100% 50%">15.31%</div><div style="position:absolute;right:244.31px;top:1222.2px;font:400 21px/22px 'Liberation Mono',monospace;letter-spacing:1.69px;color:#e6e6e6;white-space:pre;transform:scaleX(0.75);transform-origin:1.69px 50%;transform-origin:100% 50%">16.15%</div><div style="position:absolute;right:158.31px;top:1222.2px;font:400 21px/22px 'Liberation Mono',monospace;letter-spacing:1.69px;color:#e6e6e6;white-space:pre;transform:scaleX(0.75);transform-origin:1.69px 50%;transform-origin:100% 50%">16.22%</div><div style="position:absolute;right:72.31px;top:1222.2px;font:400 21px/22px 'Liberation Mono',monospace;letter-spacing:1.69px;color:#e6e6e6;white-space:pre;transform:scaleX(0.75);transform-origin:1.69px 50%;transform-origin:100% 50%">14.44%</div><div style="position:absolute;right:-13.69px;top:1222.2px;font:400 21px/22px 'Liberation Mono',monospace;letter-spacing:1.69px;color:#e6e6e6;white-space:pre;transform:scaleX(0.75);transform-origin:1.69px 50%;transform-origin:100% 50%">13.65%</div><div style="position:absolute;left:257px;top:1260.97px;font:400 18.6px/21.39px 'Liberation Sans',sans-serif;color:#b9bec8;white-space:pre;">2016, High DTI</div><div style="position:absolute;right:1457.31px;top:1264.2px;font:400 21px/22px 'Liberation Mono',monospace;letter-spacing:1.69px;color:#e6e6e6;white-space:pre;transform:scaleX(0.75);transform-origin:1.69px 50%;transform-origin:100% 50%">-</div><div style="position:absolute;right:1382.31px;top:1264.2px;font:400 21px/22px 'Liberation Mono',monospace;letter-spacing:1.69px;color:#e6e6e6;white-space:pre;transform:scaleX(0.75);transform-origin:1.69px 50%;transform-origin:100% 50%">-</div><div style="position:absolute;right:1307.31px;top:1264.2px;font:400 21px/22px 'Liberation Mono',monospace;letter-spacing:1.69px;color:#e6e6e6;white-space:pre;transform:scaleX(0.75);transform-origin:1.69px 50%;transform-origin:100% 50%">0.18%</div><div style="position:absolute;right:1232.31px;top:1264.2px;font:400 21px/22px 'Liberation Mono',monospace;letter-spacing:1.69px;color:#e6e6e6;white-space:pre;transform:scaleX(0.75);transform-origin:1.69px 50%;transform-origin:100% 50%">0.98%</div><div style="position:absolute;right:1157.31px;top:1264.2px;font:400 21px/22px 'Liberation Mono',monospace;letter-spacing:1.69px;color:#e6e6e6;white-space:pre;transform:scaleX(0.75);transform-origin:1.69px 50%;transform-origin:100% 50%">1.49%</div><div style="position:absolute;right:1082.31px;top:1264.2px;font:400 21px/22px 'Liberation Mono',monospace;letter-spacing:1.69px;color:#e6e6e6;white-space:pre;transform:scaleX(0.75);transform-origin:1.69px 50%;transform-origin:100% 50%">4.50%</div><div style="position:absolute;right:1007.31px;top:1264.2px;font:400 21px/22px 'Liberation Mono',monospace;letter-spacing:1.69px;color:#e6e6e6;white-space:pre;transform:scaleX(0.75);transform-origin:1.69px 50%;transform-origin:100% 50%">6.36%</div><div style="position:absolute;right:932.31px;top:1264.2px;font:400 21px/22px 'Liberation Mono',monospace;letter-spacing:1.69px;color:#e6e6e6;white-space:pre;transform:scaleX(0.75);transform-origin:1.69px 50%;transform-origin:100% 50%">7.00%</div><div style="position:absolute;right:846.31px;top:1264.2px;font:400 21px/22px 'Liberation Mono',monospace;letter-spacing:1.69px;color:#e6e6e6;white-space:pre;transform:scaleX(0.75);transform-origin:1.69px 50%;transform-origin:100% 50%">7.84%</div><div style="position:absolute;right:760.31px;top:1264.2px;font:400 21px/22px 'Liberation Mono',monospace;letter-spacing:1.69px;color:#e6e6e6;white-space:pre;transform:scaleX(0.75);transform-origin:1.69px 50%;transform-origin:100% 50%">7.61%</div><div style="position:absolute;right:674.31px;top:1264.2px;font:400 21px/22px 'Liberation Mono',monospace;letter-spacing:1.69px;color:#e6e6e6;white-space:pre;transform:scaleX(0.75);transform-origin:1.69px 50%;transform-origin:100% 50%">8.00%</div><div style="position:absolute;right:588.31px;top:1264.2px;font:400 21px/22px 'Liberation Mono',monospace;letter-spacing:1.69px;color:#e6e6e6;white-space:pre;transform:scaleX(0.75);transform-origin:1.69px 50%;transform-origin:100% 50%">8.41%</div><div style="position:absolute;right:502.31px;top:1264.2px;font:400 21px/22px 'Liberation Mono',monospace;letter-spacing:1.69px;color:#e6e6e6;white-space:pre;transform:scaleX(0.75);transform-origin:1.69px 50%;transform-origin:100% 50%">8.67%</div><div style="position:absolute;right:416.31px;top:1264.2px;font:400 21px/22px 'Liberation Mono',monospace;letter-spacing:1.69px;color:#e6e6e6;white-space:pre;transform:scaleX(0.75);transform-origin:1.69px 50%;transform-origin:100% 50%">8.83%</div><div style="position:absolute;right:330.31px;top:1264.2px;font:400 21px/22px 'Liberation Mono',monospace;letter-spacing:1.69px;color:#e6e6e6;white-space:pre;transform:scaleX(0.75);transform-origin:1.69px 50%;transform-origin:100% 50%">9.28%</div><div style="position:absolute;right:244.31px;top:1264.2px;font:400 21px/22px 'Liberation Mono',monospace;letter-spacing:1.69px;color:#e6e6e6;white-space:pre;transform:scaleX(0.75);transform-origin:1.69px 50%;transform-origin:100% 50%">8.83%</div><div style="position:absolute;right:158.31px;top:1264.2px;font:400 21px/22px 'Liberation Mono',monospace;letter-spacing:1.69px;color:#e6e6e6;white-space:pre;transform:scaleX(0.75);transform-origin:1.69px 50%;transform-origin:100% 50%">9.38%</div><div style="position:absolute;right:72.31px;top:1264.2px;font:400 21px/22px 'Liberation Mono',monospace;letter-spacing:1.69px;color:#e6e6e6;white-space:pre;transform:scaleX(0.75);transform-origin:1.69px 50%;transform-origin:100% 50%">9.02%</div><div style="position:absolute;right:-13.69px;top:1264.2px;font:400 21px/22px 'Liberation Mono',monospace;letter-spacing:1.69px;color:#e6e6e6;white-space:pre;transform:scaleX(0.75);transform-origin:1.69px 50%;transform-origin:100% 50%">9.75%</div><div style="position:absolute;left:257px;top:1302.97px;font:400 18.6px/21.39px 'Liberation Sans',sans-serif;color:#b9bec8;white-space:pre;">2017, High DTI</div><div style="position:absolute;right:1457.31px;top:1306.2px;font:400 21px/22px 'Liberation Mono',monospace;letter-spacing:1.69px;color:#e6e6e6;white-space:pre;transform:scaleX(0.75);transform-origin:1.69px 50%;transform-origin:100% 50%">-</div><div style="position:absolute;right:1382.31px;top:1306.2px;font:400 21px/22px 'Liberation Mono',monospace;letter-spacing:1.69px;color:#e6e6e6;white-space:pre;transform:scaleX(0.75);transform-origin:1.69px 50%;transform-origin:100% 50%">0.19%</div><div style="position:absolute;right:1307.31px;top:1306.2px;font:400 21px/22px 'Liberation Mono',monospace;letter-spacing:1.69px;color:#e6e6e6;white-space:pre;transform:scaleX(0.75);transform-origin:1.69px 50%;transform-origin:100% 50%">1.47%</div><div style="position:absolute;right:1232.31px;top:1306.2px;font:400 21px/22px 'Liberation Mono',monospace;letter-spacing:1.69px;color:#e6e6e6;white-space:pre;transform:scaleX(0.75);transform-origin:1.69px 50%;transform-origin:100% 50%">2.18%</div><div style="position:absolute;right:1157.31px;top:1306.2px;font:400 21px/22px 'Liberation Mono',monospace;letter-spacing:1.69px;color:#e6e6e6;white-space:pre;transform:scaleX(0.75);transform-origin:1.69px 50%;transform-origin:100% 50%">4.75%</div><div style="position:absolute;right:1082.31px;top:1306.2px;font:400 21px/22px 'Liberation Mono',monospace;letter-spacing:1.69px;color:#e6e6e6;white-space:pre;transform:scaleX(0.75);transform-origin:1.69px 50%;transform-origin:100% 50%">7.69%</div><div style="position:absolute;right:1007.31px;top:1306.2px;font:400 21px/22px 'Liberation Mono',monospace;letter-spacing:1.69px;color:#e6e6e6;white-space:pre;transform:scaleX(0.75);transform-origin:1.69px 50%;transform-origin:100% 50%">8.63%</div><div style="position:absolute;right:932.31px;top:1306.2px;font:400 21px/22px 'Liberation Mono',monospace;letter-spacing:1.69px;color:#e6e6e6;white-space:pre;transform:scaleX(0.75);transform-origin:1.69px 50%;transform-origin:100% 50%">8.61%</div><div style="position:absolute;right:846.31px;top:1306.2px;font:400 21px/22px 'Liberation Mono',monospace;letter-spacing:1.69px;color:#e6e6e6;white-space:pre;transform:scaleX(0.75);transform-origin:1.69px 50%;transform-origin:100% 50%">7.87%</div><div style="position:absolute;right:760.31px;top:1306.2px;font:400 21px/22px 'Liberation Mono',monospace;letter-spacing:1.69px;color:#e6e6e6;white-space:pre;transform:scaleX(0.75);transform-origin:1.69px 50%;transform-origin:100% 50%">7.63%</div><div style="position:absolute;right:674.31px;top:1306.2px;font:400 21px/22px 'Liberation Mono',monospace;letter-spacing:1.69px;color:#e6e6e6;white-space:pre;transform:scaleX(0.75);transform-origin:1.69px 50%;transform-origin:100% 50%">6.85%</div><div style="position:absolute;right:588.31px;top:1306.2px;font:400 21px/22px 'Liberation Mono',monospace;letter-spacing:1.69px;color:#e6e6e6;white-space:pre;transform:scaleX(0.75);transform-origin:1.69px 50%;transform-origin:100% 50%">7.42%</div><div style="position:absolute;right:502.31px;top:1306.2px;font:400 21px/22px 'Liberation Mono',monospace;letter-spacing:1.69px;color:#e6e6e6;white-space:pre;transform:scaleX(0.75);transform-origin:1.69px 50%;transform-origin:100% 50%">7.15%</div><div style="position:absolute;right:416.31px;top:1306.2px;font:400 21px/22px 'Liberation Mono',monospace;letter-spacing:1.69px;color:#e6e6e6;white-space:pre;transform:scaleX(0.75);transform-origin:1.69px 50%;transform-origin:100% 50%">7.28%</div><div style="position:absolute;right:330.31px;top:1306.2px;font:400 21px/22px 'Liberation Mono',monospace;letter-spacing:1.69px;color:#e6e6e6;white-space:pre;transform:scaleX(0.75);transform-origin:1.69px 50%;transform-origin:100% 50%">-</div><div style="position:absolute;right:244.31px;top:1306.2px;font:400 21px/22px 'Liberation Mono',monospace;letter-spacing:1.69px;color:#e6e6e6;white-space:pre;transform:scaleX(0.75);transform-origin:1.69px 50%;transform-origin:100% 50%">-</div><div style="position:absolute;right:158.31px;top:1306.2px;font:400 21px/22px 'Liberation Mono',monospace;letter-spacing:1.69px;color:#e6e6e6;white-space:pre;transform:scaleX(0.75);transform-origin:1.69px 50%;transform-origin:100% 50%">-</div><div style="position:absolute;right:72.31px;top:1306.2px;font:400 21px/22px 'Liberation Mono',monospace;letter-spacing:1.69px;color:#e6e6e6;white-space:pre;transform:scaleX(0.75);transform-origin:1.69px 50%;transform-origin:100% 50%">-</div><div style="position:absolute;right:-13.69px;top:1306.2px;font:400 21px/22px 'Liberation Mono',monospace;letter-spacing:1.69px;color:#e6e6e6;white-space:pre;transform:scaleX(0.75);transform-origin:1.69px 50%;transform-origin:100% 50%">-</div><div style="position:absolute;left:257px;top:1344.97px;font:400 18.6px/21.39px 'Liberation Sans',sans-serif;color:#b9bec8;white-space:pre;">2018, High DTI</div><div style="position:absolute;right:1457.31px;top:1348.2px;font:400 21px/22px 'Liberation Mono',monospace;letter-spacing:1.69px;color:#8b9099;white-space:pre;transform:scaleX(0.75);transform-origin:1.69px 50%;transform-origin:100% 50%">0.00%</div><div style="position:absolute;right:1382.31px;top:1348.2px;font:400 21px/22px 'Liberation Mono',monospace;letter-spacing:1.69px;color:#e6e6e6;white-space:pre;transform:scaleX(0.75);transform-origin:1.69px 50%;transform-origin:100% 50%">0.57%</div><div style="position:absolute;right:1307.31px;top:1348.2px;font:400 21px/22px 'Liberation Mono',monospace;letter-spacing:1.69px;color:#e6e6e6;white-space:pre;transform:scaleX(0.75);transform-origin:1.69px 50%;transform-origin:100% 50%">2.18%</div><div style="position:absolute;right:1232.31px;top:1348.2px;font:400 21px/22px 'Liberation Mono',monospace;letter-spacing:1.69px;color:#e6e6e6;white-space:pre;transform:scaleX(0.75);transform-origin:1.69px 50%;transform-origin:100% 50%">4.29%</div><div style="position:absolute;right:1157.31px;top:1348.2px;font:400 21px/22px 'Liberation Mono',monospace;letter-spacing:1.69px;color:#e6e6e6;white-space:pre;transform:scaleX(0.75);transform-origin:1.69px 50%;transform-origin:100% 50%">5.58%</div><div style="position:absolute;right:1082.31px;top:1348.2px;font:400 21px/22px 'Liberation Mono',monospace;letter-spacing:1.69px;color:#e6e6e6;white-space:pre;transform:scaleX(0.75);transform-origin:1.69px 50%;transform-origin:100% 50%">-</div><div style="position:absolute;right:1007.31px;top:1348.2px;font:400 21px/22px 'Liberation Mono',monospace;letter-spacing:1.69px;color:#e6e6e6;white-space:pre;transform:scaleX(0.75);transform-origin:1.69px 50%;transform-origin:100% 50%">-</div><div style="position:absolute;right:932.31px;top:1348.2px;font:400 21px/22px 'Liberation Mono',monospace;letter-spacing:1.69px;color:#e6e6e6;white-space:pre;transform:scaleX(0.75);transform-origin:1.69px 50%;transform-origin:100% 50%">-</div><div style="position:absolute;right:846.31px;top:1348.2px;font:400 21px/22px 'Liberation Mono',monospace;letter-spacing:1.69px;color:#e6e6e6;white-space:pre;transform:scaleX(0.75);transform-origin:1.69px 50%;transform-origin:100% 50%">-</div><div style="position:absolute;right:760.31px;top:1348.2px;font:400 21px/22px 'Liberation Mono',monospace;letter-spacing:1.69px;color:#e6e6e6;white-space:pre;transform:scaleX(0.75);transform-origin:1.69px 50%;transform-origin:100% 50%">-</div><div style="position:absolute;right:674.31px;top:1348.2px;font:400 21px/22px 'Liberation Mono',monospace;letter-spacing:1.69px;color:#e6e6e6;white-space:pre;transform:scaleX(0.75);transform-origin:1.69px 50%;transform-origin:100% 50%">-</div><div style="position:absolute;right:588.31px;top:1348.2px;font:400 21px/22px 'Liberation Mono',monospace;letter-spacing:1.69px;color:#e6e6e6;white-space:pre;transform:scaleX(0.75);transform-origin:1.69px 50%;transform-origin:100% 50%">-</div><div style="position:absolute;right:502.31px;top:1348.2px;font:400 21px/22px 'Liberation Mono',monospace;letter-spacing:1.69px;color:#e6e6e6;white-space:pre;transform:scaleX(0.75);transform-origin:1.69px 50%;transform-origin:100% 50%">-</div><div style="position:absolute;right:416.31px;top:1348.2px;font:400 21px/22px 'Liberation Mono',monospace;letter-spacing:1.69px;color:#e6e6e6;white-space:pre;transform:scaleX(0.75);transform-origin:1.69px 50%;transform-origin:100% 50%">-</div><div style="position:absolute;right:330.31px;top:1348.2px;font:400 21px/22px 'Liberation Mono',monospace;letter-spacing:1.69px;color:#e6e6e6;white-space:pre;transform:scaleX(0.75);transform-origin:1.69px 50%;transform-origin:100% 50%">-</div><div style="position:absolute;right:244.31px;top:1348.2px;font:400 21px/22px 'Liberation Mono',monospace;letter-spacing:1.69px;color:#e6e6e6;white-space:pre;transform:scaleX(0.75);transform-origin:1.69px 50%;transform-origin:100% 50%">-</div><div style="position:absolute;right:158.31px;top:1348.2px;font:400 21px/22px 'Liberation Mono',monospace;letter-spacing:1.69px;color:#e6e6e6;white-space:pre;transform:scaleX(0.75);transform-origin:1.69px 50%;transform-origin:100% 50%">-</div><div style="position:absolute;right:72.31px;top:1348.2px;font:400 21px/22px 'Liberation Mono',monospace;letter-spacing:1.69px;color:#e6e6e6;white-space:pre;transform:scaleX(0.75);transform-origin:1.69px 50%;transform-origin:100% 50%">-</div><div style="position:absolute;right:-13.69px;top:1348.2px;font:400 21px/22px 'Liberation Mono',monospace;letter-spacing:1.69px;color:#e6e6e6;white-space:pre;transform:scaleX(0.75);transform-origin:1.69px 50%;transform-origin:100% 50%">-</div><div style="position:absolute;left:257px;top:1386.97px;font:400 18.6px/21.39px 'Liberation Sans',sans-serif;color:#b9bec8;white-space:pre;">2015, Low DTI</div><div style="position:absolute;right:1457.31px;top:1390.2px;font:400 21px/22px 'Liberation Mono',monospace;letter-spacing:1.69px;color:#e6e6e6;white-space:pre;transform:scaleX(0.75);transform-origin:1.69px 50%;transform-origin:100% 50%">-</div><div style="position:absolute;right:1382.31px;top:1390.2px;font:400 21px/22px 'Liberation Mono',monospace;letter-spacing:1.69px;color:#e6e6e6;white-space:pre;transform:scaleX(0.75);transform-origin:1.69px 50%;transform-origin:100% 50%">-</div><div style="position:absolute;right:1307.31px;top:1390.2px;font:400 21px/22px 'Liberation Mono',monospace;letter-spacing:1.69px;color:#e6e6e6;white-space:pre;transform:scaleX(0.75);transform-origin:1.69px 50%;transform-origin:100% 50%">-</div><div style="position:absolute;right:1232.31px;top:1390.2px;font:400 21px/22px 'Liberation Mono',monospace;letter-spacing:1.69px;color:#8b9099;white-space:pre;transform:scaleX(0.75);transform-origin:1.69px 50%;transform-origin:100% 50%">0.00%</div><div style="position:absolute;right:1157.31px;top:1390.2px;font:400 21px/22px 'Liberation Mono',monospace;letter-spacing:1.69px;color:#e6e6e6;white-space:pre;transform:scaleX(0.75);transform-origin:1.69px 50%;transform-origin:100% 50%">1.30%</div><div style="position:absolute;right:1082.31px;top:1390.2px;font:400 21px/22px 'Liberation Mono',monospace;letter-spacing:1.69px;color:#e6e6e6;white-space:pre;transform:scaleX(0.75);transform-origin:1.69px 50%;transform-origin:100% 50%">3.24%</div><div style="position:absolute;right:1007.31px;top:1390.2px;font:400 21px/22px 'Liberation Mono',monospace;letter-spacing:1.69px;color:#e6e6e6;white-space:pre;transform:scaleX(0.75);transform-origin:1.69px 50%;transform-origin:100% 50%">3.84%</div><div style="position:absolute;right:932.31px;top:1390.2px;font:400 21px/22px 'Liberation Mono',monospace;letter-spacing:1.69px;color:#e6e6e6;white-space:pre;transform:scaleX(0.75);transform-origin:1.69px 50%;transform-origin:100% 50%">7.27%</div><div style="position:absolute;right:846.31px;top:1390.2px;font:400 21px/22px 'Liberation Mono',monospace;letter-spacing:1.69px;color:#e6e6e6;white-space:pre;transform:scaleX(0.75);transform-origin:1.69px 50%;transform-origin:100% 50%">9.64%</div><div style="position:absolute;right:760.31px;top:1390.2px;font:400 21px/22px 'Liberation Mono',monospace;letter-spacing:1.69px;color:#e6e6e6;white-space:pre;transform:scaleX(0.75);transform-origin:1.69px 50%;transform-origin:100% 50%">11.31%</div><div style="position:absolute;right:674.31px;top:1390.2px;font:400 21px/22px 'Liberation Mono',monospace;letter-spacing:1.69px;color:#e6e6e6;white-space:pre;transform:scaleX(0.75);transform-origin:1.69px 50%;transform-origin:100% 50%">14.47%</div><div style="position:absolute;right:588.31px;top:1390.2px;font:400 21px/22px 'Liberation Mono',monospace;letter-spacing:1.69px;color:#e6e6e6;white-space:pre;transform:scaleX(0.75);transform-origin:1.69px 50%;transform-origin:100% 50%">16.31%</div><div style="position:absolute;right:502.31px;top:1390.2px;font:400 21px/22px 'Liberation Mono',monospace;letter-spacing:1.69px;color:#e6e6e6;white-space:pre;transform:scaleX(0.75);transform-origin:1.69px 50%;transform-origin:100% 50%">17.15%</div><div style="position:absolute;right:416.31px;top:1390.2px;font:400 21px/22px 'Liberation Mono',monospace;letter-spacing:1.69px;color:#e6e6e6;white-space:pre;transform:scaleX(0.75);transform-origin:1.69px 50%;transform-origin:100% 50%">16.14%</div><div style="position:absolute;right:330.31px;top:1390.2px;font:400 21px/22px 'Liberation Mono',monospace;letter-spacing:1.69px;color:#e6e6e6;white-space:pre;transform:scaleX(0.75);transform-origin:1.69px 50%;transform-origin:100% 50%">15.44%</div><div style="position:absolute;right:244.31px;top:1390.2px;font:400 21px/22px 'Liberation Mono',monospace;letter-spacing:1.69px;color:#e6e6e6;white-space:pre;transform:scaleX(0.75);transform-origin:1.69px 50%;transform-origin:100% 50%">15.34%</div><div style="position:absolute;right:158.31px;top:1390.2px;font:400 21px/22px 'Liberation Mono',monospace;letter-spacing:1.69px;color:#e6e6e6;white-space:pre;transform:scaleX(0.75);transform-origin:1.69px 50%;transform-origin:100% 50%">15.08%</div><div style="position:absolute;right:72.31px;top:1390.2px;font:400 21px/22px 'Liberation Mono',monospace;letter-spacing:1.69px;color:#e6e6e6;white-space:pre;transform:scaleX(0.75);transform-origin:1.69px 50%;transform-origin:100% 50%">14.08%</div><div style="position:absolute;right:-13.69px;top:1390.2px;font:400 21px/22px 'Liberation Mono',monospace;letter-spacing:1.69px;color:#e6e6e6;white-space:pre;transform:scaleX(0.75);transform-origin:1.69px 50%;transform-origin:100% 50%">13.36%</div><div style="position:absolute;left:257px;top:1428.97px;font:400 18.6px/21.39px 'Liberation Sans',sans-serif;color:#b9bec8;white-space:pre;">2016, Low DTI</div><div style="position:absolute;right:1457.31px;top:1432.2px;font:400 21px/22px 'Liberation Mono',monospace;letter-spacing:1.69px;color:#e6e6e6;white-space:pre;transform:scaleX(0.75);transform-origin:1.69px 50%;transform-origin:100% 50%">-</div><div style="position:absolute;right:1382.31px;top:1432.2px;font:400 21px/22px 'Liberation Mono',monospace;letter-spacing:1.69px;color:#8b9099;white-space:pre;transform:scaleX(0.75);transform-origin:1.69px 50%;transform-origin:100% 50%">0.00%</div><div style="position:absolute;right:1307.31px;top:1432.2px;font:400 21px/22px 'Liberation Mono',monospace;letter-spacing:1.69px;color:#e6e6e6;white-space:pre;transform:scaleX(0.75);transform-origin:1.69px 50%;transform-origin:100% 50%">0.28%</div><div style="position:absolute;right:1232.31px;top:1432.2px;font:400 21px/22px 'Liberation Mono',monospace;letter-spacing:1.69px;color:#e6e6e6;white-space:pre;transform:scaleX(0.75);transform-origin:1.69px 50%;transform-origin:100% 50%">0.78%</div><div style="position:absolute;right:1157.31px;top:1432.2px;font:400 21px/22px 'Liberation Mono',monospace;letter-spacing:1.69px;color:#e6e6e6;white-space:pre;transform:scaleX(0.75);transform-origin:1.69px 50%;transform-origin:100% 50%">1.51%</div><div style="position:absolute;right:1082.31px;top:1432.2px;font:400 21px/22px 'Liberation Mono',monospace;letter-spacing:1.69px;color:#e6e6e6;white-space:pre;transform:scaleX(0.75);transform-origin:1.69px 50%;transform-origin:100% 50%">3.81%</div><div style="position:absolute;right:1007.31px;top:1432.2px;font:400 21px/22px 'Liberation Mono',monospace;letter-spacing:1.69px;color:#e6e6e6;white-space:pre;transform:scaleX(0.75);transform-origin:1.69px 50%;transform-origin:100% 50%">5.21%</div><div style="position:absolute;right:932.31px;top:1432.2px;font:400 21px/22px 'Liberation Mono',monospace;letter-spacing:1.69px;color:#e6e6e6;white-space:pre;transform:scaleX(0.75);transform-origin:1.69px 50%;transform-origin:100% 50%">6.13%</div><div style="position:absolute;right:846.31px;top:1432.2px;font:400 21px/22px 'Liberation Mono',monospace;letter-spacing:1.69px;color:#e6e6e6;white-space:pre;transform:scaleX(0.75);transform-origin:1.69px 50%;transform-origin:100% 50%">6.60%</div><div style="position:absolute;right:760.31px;top:1432.2px;font:400 21px/22px 'Liberation Mono',monospace;letter-spacing:1.69px;color:#e6e6e6;white-space:pre;transform:scaleX(0.75);transform-origin:1.69px 50%;transform-origin:100% 50%">6.59%</div><div style="position:absolute;right:674.31px;top:1432.2px;font:400 21px/22px 'Liberation Mono',monospace;letter-spacing:1.69px;color:#e6e6e6;white-space:pre;transform:scaleX(0.75);transform-origin:1.69px 50%;transform-origin:100% 50%">6.80%</div><div style="position:absolute;right:588.31px;top:1432.2px;font:400 21px/22px 'Liberation Mono',monospace;letter-spacing:1.69px;color:#e6e6e6;white-space:pre;transform:scaleX(0.75);transform-origin:1.69px 50%;transform-origin:100% 50%">7.42%</div><div style="position:absolute;right:502.31px;top:1432.2px;font:400 21px/22px 'Liberation Mono',monospace;letter-spacing:1.69px;color:#e6e6e6;white-space:pre;transform:scaleX(0.75);transform-origin:1.69px 50%;transform-origin:100% 50%">7.57%</div><div style="position:absolute;right:416.31px;top:1432.2px;font:400 21px/22px 'Liberation Mono',monospace;letter-spacing:1.69px;color:#e6e6e6;white-space:pre;transform:scaleX(0.75);transform-origin:1.69px 50%;transform-origin:100% 50%">7.57%</div><div style="position:absolute;right:330.31px;top:1432.2px;font:400 21px/22px 'Liberation Mono',monospace;letter-spacing:1.69px;color:#e6e6e6;white-space:pre;transform:scaleX(0.75);transform-origin:1.69px 50%;transform-origin:100% 50%">7.69%</div><div style="position:absolute;right:244.31px;top:1432.2px;font:400 21px/22px 'Liberation Mono',monospace;letter-spacing:1.69px;color:#e6e6e6;white-space:pre;transform:scaleX(0.75);transform-origin:1.69px 50%;transform-origin:100% 50%">7.83%</div><div style="position:absolute;right:158.31px;top:1432.2px;font:400 21px/22px 'Liberation Mono',monospace;letter-spacing:1.69px;color:#e6e6e6;white-space:pre;transform:scaleX(0.75);transform-origin:1.69px 50%;transform-origin:100% 50%">8.06%</div><div style="position:absolute;right:72.31px;top:1432.2px;font:400 21px/22px 'Liberation Mono',monospace;letter-spacing:1.69px;color:#e6e6e6;white-space:pre;transform:scaleX(0.75);transform-origin:1.69px 50%;transform-origin:100% 50%">8.08%</div><div style="position:absolute;right:-13.69px;top:1432.2px;font:400 21px/22px 'Liberation Mono',monospace;letter-spacing:1.69px;color:#e6e6e6;white-space:pre;transform:scaleX(0.75);transform-origin:1.69px 50%;transform-origin:100% 50%">8.41%</div><div style="position:absolute;left:257px;top:1470.97px;font:400 18.6px/21.39px 'Liberation Sans',sans-serif;color:#b9bec8;white-space:pre;">2017, Low DTI</div><div style="position:absolute;right:1457.31px;top:1474.2px;font:400 21px/22px 'Liberation Mono',monospace;letter-spacing:1.69px;color:#e6e6e6;white-space:pre;transform:scaleX(0.75);transform-origin:1.69px 50%;transform-origin:100% 50%">-</div><div style="position:absolute;right:1382.31px;top:1474.2px;font:400 21px/22px 'Liberation Mono',monospace;letter-spacing:1.69px;color:#e6e6e6;white-space:pre;transform:scaleX(0.75);transform-origin:1.69px 50%;transform-origin:100% 50%">0.10%</div><div style="position:absolute;right:1307.31px;top:1474.2px;font:400 21px/22px 'Liberation Mono',monospace;letter-spacing:1.69px;color:#e6e6e6;white-space:pre;transform:scaleX(0.75);transform-origin:1.69px 50%;transform-origin:100% 50%">0.90%</div><div style="position:absolute;right:1232.31px;top:1474.2px;font:400 21px/22px 'Liberation Mono',monospace;letter-spacing:1.69px;color:#e6e6e6;white-space:pre;transform:scaleX(0.75);transform-origin:1.69px 50%;transform-origin:100% 50%">1.96%</div><div style="position:absolute;right:1157.31px;top:1474.2px;font:400 21px/22px 'Liberation Mono',monospace;letter-spacing:1.69px;color:#e6e6e6;white-space:pre;transform:scaleX(0.75);transform-origin:1.69px 50%;transform-origin:100% 50%">4.07%</div><div style="position:absolute;right:1082.31px;top:1474.2px;font:400 21px/22px 'Liberation Mono',monospace;letter-spacing:1.69px;color:#e6e6e6;white-space:pre;transform:scaleX(0.75);transform-origin:1.69px 50%;transform-origin:100% 50%">6.63%</div><div style="position:absolute;right:1007.31px;top:1474.2px;font:400 21px/22px 'Liberation Mono',monospace;letter-spacing:1.69px;color:#e6e6e6;white-space:pre;transform:scaleX(0.75);transform-origin:1.69px 50%;transform-origin:100% 50%">7.58%</div><div style="position:absolute;right:932.31px;top:1474.2px;font:400 21px/22px 'Liberation Mono',monospace;letter-spacing:1.69px;color:#e6e6e6;white-space:pre;transform:scaleX(0.75);transform-origin:1.69px 50%;transform-origin:100% 50%">7.48%</div><div style="position:absolute;right:846.31px;top:1474.2px;font:400 21px/22px 'Liberation Mono',monospace;letter-spacing:1.69px;color:#e6e6e6;white-space:pre;transform:scaleX(0.75);transform-origin:1.69px 50%;transform-origin:100% 50%">6.92%</div><div style="position:absolute;right:760.31px;top:1474.2px;font:400 21px/22px 'Liberation Mono',monospace;letter-spacing:1.69px;color:#e6e6e6;white-space:pre;transform:scaleX(0.75);transform-origin:1.69px 50%;transform-origin:100% 50%">6.64%</div><div style="position:absolute;right:674.31px;top:1474.2px;font:400 21px/22px 'Liberation Mono',monospace;letter-spacing:1.69px;color:#e6e6e6;white-space:pre;transform:scaleX(0.75);transform-origin:1.69px 50%;transform-origin:100% 50%">6.92%</div><div style="position:absolute;right:588.31px;top:1474.2px;font:400 21px/22px 'Liberation Mono',monospace;letter-spacing:1.69px;color:#e6e6e6;white-space:pre;transform:scaleX(0.75);transform-origin:1.69px 50%;transform-origin:100% 50%">6.92%</div><div style="position:absolute;right:502.31px;top:1474.2px;font:400 21px/22px 'Liberation Mono',monospace;letter-spacing:1.69px;color:#e6e6e6;white-space:pre;transform:scaleX(0.75);transform-origin:1.69px 50%;transform-origin:100% 50%">6.86%</div><div style="position:absolute;right:416.31px;top:1474.2px;font:400 21px/22px 'Liberation Mono',monospace;letter-spacing:1.69px;color:#e6e6e6;white-space:pre;transform:scaleX(0.75);transform-origin:1.69px 50%;transform-origin:100% 50%">6.63%</div><div style="position:absolute;right:330.31px;top:1474.2px;font:400 21px/22px 'Liberation Mono',monospace;letter-spacing:1.69px;color:#e6e6e6;white-space:pre;transform:scaleX(0.75);transform-origin:1.69px 50%;transform-origin:100% 50%">-</div><div style="position:absolute;right:244.31px;top:1474.2px;font:400 21px/22px 'Liberation Mono',monospace;letter-spacing:1.69px;color:#e6e6e6;white-space:pre;transform:scaleX(0.75);transform-origin:1.69px 50%;transform-origin:100% 50%">-</div><div style="position:absolute;right:158.31px;top:1474.2px;font:400 21px/22px 'Liberation Mono',monospace;letter-spacing:1.69px;color:#e6e6e6;white-space:pre;transform:scaleX(0.75);transform-origin:1.69px 50%;transform-origin:100% 50%">-</div><div style="position:absolute;right:72.31px;top:1474.2px;font:400 21px/22px 'Liberation Mono',monospace;letter-spacing:1.69px;color:#e6e6e6;white-space:pre;transform:scaleX(0.75);transform-origin:1.69px 50%;transform-origin:100% 50%">-</div><div style="position:absolute;right:-13.69px;top:1474.2px;font:400 21px/22px 'Liberation Mono',monospace;letter-spacing:1.69px;color:#e6e6e6;white-space:pre;transform:scaleX(0.75);transform-origin:1.69px 50%;transform-origin:100% 50%">-</div><div style="position:absolute;left:257px;top:1512.97px;font:400 18.6px/21.39px 'Liberation Sans',sans-serif;color:#b9bec8;white-space:pre;">2018, Low DTI</div><div style="position:absolute;right:1457.31px;top:1516.2px;font:400 21px/22px 'Liberation Mono',monospace;letter-spacing:1.69px;color:#8b9099;white-space:pre;transform:scaleX(0.75);transform-origin:1.69px 50%;transform-origin:100% 50%">0.00%</div><div style="position:absolute;right:1382.31px;top:1516.2px;font:400 21px/22px 'Liberation Mono',monospace;letter-spacing:1.69px;color:#e6e6e6;white-space:pre;transform:scaleX(0.75);transform-origin:1.69px 50%;transform-origin:100% 50%">1.03%</div><div style="position:absolute;right:1307.31px;top:1516.2px;font:400 21px/22px 'Liberation Mono',monospace;letter-spacing:1.69px;color:#e6e6e6;white-space:pre;transform:scaleX(0.75);transform-origin:1.69px 50%;transform-origin:100% 50%">1.62%</div><div style="position:absolute;right:1232.31px;top:1516.2px;font:400 21px/22px 'Liberation Mono',monospace;letter-spacing:1.69px;color:#e6e6e6;white-space:pre;transform:scaleX(0.75);transform-origin:1.69px 50%;transform-origin:100% 50%">3.56%</div><div style="position:absolute;right:1157.31px;top:1516.2px;font:400 21px/22px 'Liberation Mono',monospace;letter-spacing:1.69px;color:#e6e6e6;white-space:pre;transform:scaleX(0.75);transform-origin:1.69px 50%;transform-origin:100% 50%">5.26%</div><div style="position:absolute;right:1082.31px;top:1516.2px;font:400 21px/22px 'Liberation Mono',monospace;letter-spacing:1.69px;color:#e6e6e6;white-space:pre;transform:scaleX(0.75);transform-origin:1.69px 50%;transform-origin:100% 50%">-</div><div style="position:absolute;right:1007.31px;top:1516.2px;font:400 21px/22px 'Liberation Mono',monospace;letter-spacing:1.69px;color:#e6e6e6;white-space:pre;transform:scaleX(0.75);transform-origin:1.69px 50%;transform-origin:100% 50%">-</div><div style="position:absolute;right:932.31px;top:1516.2px;font:400 21px/22px 'Liberation Mono',monospace;letter-spacing:1.69px;color:#e6e6e6;white-space:pre;transform:scaleX(0.75);transform-origin:1.69px 50%;transform-origin:100% 50%">-</div><div style="position:absolute;right:846.31px;top:1516.2px;font:400 21px/22px 'Liberation Mono',monospace;letter-spacing:1.69px;color:#e6e6e6;white-space:pre;transform:scaleX(0.75);transform-origin:1.69px 50%;transform-origin:100% 50%">-</div><div style="position:absolute;right:760.31px;top:1516.2px;font:400 21px/22px 'Liberation Mono',monospace;letter-spacing:1.69px;color:#e6e6e6;white-space:pre;transform:scaleX(0.75);transform-origin:1.69px 50%;transform-origin:100% 50%">-</div><div style="position:absolute;right:674.31px;top:1516.2px;font:400 21px/22px 'Liberation Mono',monospace;letter-spacing:1.69px;color:#e6e6e6;white-space:pre;transform:scaleX(0.75);transform-origin:1.69px 50%;transform-origin:100% 50%">-</div><div style="position:absolute;right:588.31px;top:1516.2px;font:400 21px/22px 'Liberation Mono',monospace;letter-spacing:1.69px;color:#e6e6e6;white-space:pre;transform:scaleX(0.75);transform-origin:1.69px 50%;transform-origin:100% 50%">-</div><div style="position:absolute;right:502.31px;top:1516.2px;font:400 21px/22px 'Liberation Mono',monospace;letter-spacing:1.69px;color:#e6e6e6;white-space:pre;transform:scaleX(0.75);transform-origin:1.69px 50%;transform-origin:100% 50%">-</div><div style="position:absolute;right:416.31px;top:1516.2px;font:400 21px/22px 'Liberation Mono',monospace;letter-spacing:1.69px;color:#e6e6e6;white-space:pre;transform:scaleX(0.75);transform-origin:1.69px 50%;transform-origin:100% 50%">-</div><div style="position:absolute;right:330.31px;top:1516.2px;font:400 21px/22px 'Liberation Mono',monospace;letter-spacing:1.69px;color:#e6e6e6;white-space:pre;transform:scaleX(0.75);transform-origin:1.69px 50%;transform-origin:100% 50%">-</div><div style="position:absolute;right:244.31px;top:1516.2px;font:400 21px/22px 'Liberation Mono',monospace;letter-spacing:1.69px;color:#e6e6e6;white-space:pre;transform:scaleX(0.75);transform-origin:1.69px 50%;transform-origin:100% 50%">-</div><div style="position:absolute;right:158.31px;top:1516.2px;font:400 21px/22px 'Liberation Mono',monospace;letter-spacing:1.69px;color:#e6e6e6;white-space:pre;transform:scaleX(0.75);transform-origin:1.69px 50%;transform-origin:100% 50%">-</div><div style="position:absolute;right:72.31px;top:1516.2px;font:400 21px/22px 'Liberation Mono',monospace;letter-spacing:1.69px;color:#e6e6e6;white-space:pre;transform:scaleX(0.75);transform-origin:1.69px 50%;transform-origin:100% 50%">-</div><div style="position:absolute;right:-13.69px;top:1516.2px;font:400 21px/22px 'Liberation Mono',monospace;letter-spacing:1.69px;color:#e6e6e6;white-space:pre;transform:scaleX(0.75);transform-origin:1.69px 50%;transform-origin:100% 50%">-</div></div>
<div style="position:absolute;left:2087px;top:1141px;width:1px;height:420px;background:#7d838f"></div>
<div style="position:absolute;left:0;top:1541px;width:2100px;height:8px;background:#0f1017"></div>
</body></html>
